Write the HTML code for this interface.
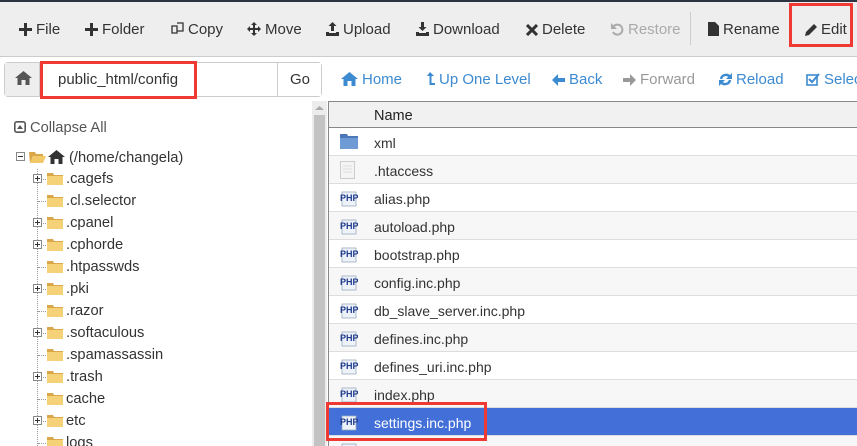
<!DOCTYPE html>
<html><head><meta charset="utf-8"><style>
*{margin:0;padding:0;box-sizing:border-box}
html,body{width:857px;height:446px;overflow:hidden}
body{background:#fff;font-family:"Liberation Sans",sans-serif;position:relative;color:#333}
.a{position:absolute;white-space:nowrap}
.tb{left:0;top:0;width:857px;height:57px;background:#eee;border-top:2px solid #2b3440;border-bottom:1px solid #ccc}
.t{font-size:15px;top:21px;color:#333}
.t svg{vertical-align:-2px;margin-right:4px}
.nav{font-size:15px;top:71px;color:#3c8ad0}
.nav svg{vertical-align:-2px;margin-right:4px}
.red{border:3px solid #ef3a33}
.tree{font-size:14.7px;color:#333}
.row{left:328px;width:529px;height:28px;border-bottom:1px solid #ddd;font-size:14px}
.row span{position:absolute;left:46px;top:7px}
.row svg{position:absolute;left:12px;top:5px}
.dot{border-left:1px dotted #999}
</style></head><body>
<div class="a tb"></div>
<div class="a" style="left:690px;top:12px;width:1px;height:33px;background:#ccc"></div>
<div class="a t" style="left:19px"><svg width="13" height="13"><path d="M5 0h3v5h5v3H8v5H5V8H0V5h5z" fill="#333"/></svg>File</div>
<div class="a t" style="left:85px"><svg width="13" height="13"><path d="M5 0h3v5h5v3H8v5H5V8H0V5h5z" fill="#333"/></svg>Folder</div>
<div class="a t" style="left:171px"><svg width="13" height="14"><path d="M1 4h5v7H1zM6 1h6v8H6" fill="none" stroke="#333" stroke-width="1.3"/></svg>Copy</div>
<div class="a t" style="left:247px"><svg width="14" height="14"><path d="M7 0l3 3H8v3h3V4l3 3-3 3V8H8v3h2l-3 3-3-3h2V8H3v2L0 7l3-3v2h3V3H4z" fill="#333"/></svg>Move</div>
<div class="a t" style="left:326px"><svg width="13" height="14"><path d="M6.5 0l4 4H8v5H5V4H2.5zM0 10h3v1h7v-1h3v4H0z" fill="#333"/></svg>Upload</div>
<div class="a t" style="left:416px"><svg width="13" height="14"><path d="M5 0h3v5h2.5l-4 4-4-4H5zM0 10h3v1h7v-1h3v4H0z" fill="#333"/></svg>Download</div>
<div class="a t" style="left:526px"><svg width="12" height="12"><path d="M1 1l10 10M11 1L1 11" stroke="#333" stroke-width="3"/></svg>Delete</div>
<div class="a t" style="left:611px;color:#aaa"><svg width="13" height="13"><path d="M3 3a5 5 0 1 1 -1 6" fill="none" stroke="#aaa" stroke-width="2"/><path d="M0 0v6h6z" fill="#aaa"/></svg>Restore</div>
<div class="a t" style="left:708px"><svg width="11" height="14"><path d="M0 0h7l4 4v10H0z" fill="#333"/></svg>Rename</div>
<div class="a t" style="left:805px"><svg width="12" height="12"><path d="M9 0l3 3-8 8-4 1 1-4z" fill="#333"/></svg>Edit</div>
<div class="a red" style="left:789px;top:3px;width:64px;height:44px"></div>

<div class="a" style="left:4px;top:62px;width:318px;height:35px;border:1px solid #ccc;border-radius:4px;background:#fff"></div>
<div class="a" style="left:5px;top:63px;width:35px;height:33px;background:#eee;border-right:1px solid #ccc"></div>
<svg class="a" style="left:15px;top:71px" width="17" height="14"><path d="M8.5 0L17 7h-2.5v7h-4V9h-4v5h-4V7H0z" fill="#555"/></svg>
<div class="a" style="left:277px;top:63px;width:44px;height:33px;background:#fff;border-left:1px solid #ccc;font-size:15px;padding:8px 0 0 12px">Go</div>
<div class="a" style="left:58px;top:71px;font-size:15px">public_html/config</div>
<div class="a red" style="left:40px;top:61px;width:157px;height:38px"></div>

<div class="a nav" style="left:341px"><svg width="17" height="14"><path d="M8.5 0L17 7h-2.5v7h-4V9h-4v5h-4V7H0z" fill="#3c8ad0"/></svg>Home</div>
<div class="a nav" style="left:426px"><svg width="9" height="14"><path d="M4 0l4 4H5.5v7H9v2H3.5V4H1z" fill="#3c8ad0"/></svg>Up One Level</div>
<div class="a nav" style="left:552px"><svg width="13" height="12"><path d="M0 6l6-6v4h7v4H6v4z" fill="#3c8ad0"/></svg>Back</div>
<div class="a nav" style="left:623px;color:#999"><svg width="13" height="12"><path d="M13 6L7 0v4H0v4h7v4z" fill="#999"/></svg>Forward</div>
<div class="a nav" style="left:719px"><svg width="13" height="13"><path d="M2 6a5 5 0 0 1 9-2M11 7a5 5 0 0 1-9 2" fill="none" stroke="#3c8ad0" stroke-width="2.4"/><path d="M13 0v6H7zM0 13V7h6z" fill="#3c8ad0"/></svg>Reload</div>
<div class="a nav" style="left:806px"><svg width="14" height="13"><rect x="1" y="2" width="10" height="10" fill="none" stroke="#3c8ad0" stroke-width="1.6"/><path d="M3 6l3 3 7-8" fill="none" stroke="#3c8ad0" stroke-width="2"/></svg>Select All</div>

<div class="a" style="left:14px;top:120px;font-size:14.7px;color:#555"><svg width="12" height="12" style="vertical-align:-1px;margin-right:4px"><rect x="0.8" y="0.8" width="10.4" height="10.4" rx="2" fill="none" stroke="#555" stroke-width="1.6"/><path d="M3 8l3-4 3 4z" fill="#555"/></svg>Collapse All</div>

<div class="a dot" style="left:37px;top:169px;height:277px"></div>
<div class="a" style="left:16px;top:152px;width:9px;height:9px;border:1px solid #888;background:#fff"><div style="position:absolute;left:1px;top:3px;width:5px;height:1px;background:#333"></div></div>
<svg class="a" style="left:29px;top:151px" width="17" height="13"><path d="M0 1h6l1 2h7v2H4L1 12z" fill="#d9a64a"/><path d="M4 5h13l-3 7H1z" fill="#f3c868"/></svg>
<svg class="a" style="left:48px;top:150px" width="17" height="14"><path d="M8.5 0L17 7h-2.5v7h-4V9h-4v5h-4V7H0z" fill="#333"/></svg>
<div class="a tree" style="left:69px;top:150px">(/home/changela)</div>

<div id="t"></div>
<script>
var items=[[".cagefs",1],[".cl.selector",0],[".cpanel",1],[".cphorde",1],[".htpasswds",0],[".pki",1],[".razor",0],[".softaculous",1],[".spamassassin",0],[".trash",1],["cache",0],["etc",1],["logs",0]];
var h="";
items.forEach(function(it,i){var y=179+i*22;
h+='<div class="a" style="left:38px;top:'+(y)+'px;width:8px;border-top:1px dotted #999"></div>';
if(it[1])h+='<div class="a" style="left:33px;top:'+(y-5)+'px;width:9px;height:9px;border:1px solid #888;background:#fff"><div style="position:absolute;left:1px;top:3px;width:5px;height:1px;background:#333"></div><div style="position:absolute;left:3px;top:1px;width:1px;height:5px;background:#333"></div></div>';
h+='<svg class="a" style="left:47px;top:'+(y-7)+'px" width="16" height="13"><path d="M0 1h6l1 2h9v10H0z" fill="#d9a64a"/><path d="M0 4h16v9H0z" fill="#f5d277"/></svg>';
h+='<div class="a tree" style="left:66px;top:'+(y-8)+'px">'+it[0]+'</div>';});
var files=["xml",".htaccess","alias.php","autoload.php","bootstrap.php","config.inc.php","db_slave_server.inc.php","defines.inc.php","defines_uri.inc.php","index.php","settings.inc.php","smarty.config.inc.php"];
files.forEach(function(f,i){var y=128+i*28;var sel=i==10;var bg=sel?"#4270d8":(i%2?"#f7f7f7":"#fff");
var ic;
if(i==0)ic='<svg width="18" height="16"><path d="M0 1h7l1 2h10v13H0z" fill="#4a78b8"/><path d="M0 5h18v11H0z" fill="#6e9ad6"/></svg>';
else if(i==1)ic='<svg width="16" height="18"><rect x="0.5" y="0.5" width="14" height="17" fill="#f4f4f4" stroke="#ccc"/><path d="M3 5h9M3 8h9M3 11h9" stroke="#ddd"/></svg>';
else ic='<svg width="18" height="18"><rect x="2" y="3" width="14" height="14" fill="#eef2fa" stroke="#9ab" stroke-width="0.8"/><text x="0" y="12" font-family="Liberation Sans" font-weight="bold" font-size="9" fill="#1e3a8c">PHP</text></svg>';
h+='<div class="a row" style="top:'+y+'px;background:'+bg+';'+(sel?'color:#fff':'')+'">'+ic+'<span>'+f+'</span></div>';});
document.getElementById("t").innerHTML=h;
</script>
<div class="a" style="left:312px;top:101px;width:15px;height:345px;background:#ececec"></div>
<div class="a" style="left:314px;top:115px;width:11px;height:331px;background:#c3c3c3"></div>
<svg class="a" style="left:315px;top:105px" width="9" height="6"><path d="M0 5l4.5-4 4.5 4z" fill="#aaa"/></svg>
<div class="a" style="left:328px;top:101px;width:529px;height:27px;background:#f1f1f1;border-top:1px solid #888;border-bottom:1px solid #888;font-size:14.5px;padding:6px 0 0 46px;color:#222">Name</div>
<div class="a" style="left:328px;top:101px;width:1px;height:345px;background:#888"></div>
<div class="a red" style="left:326px;top:402px;width:161px;height:39px"></div>
</body></html>
